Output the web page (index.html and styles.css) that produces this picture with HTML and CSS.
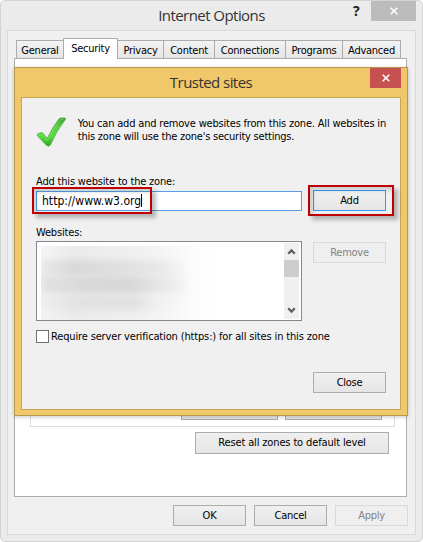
FILE: index.html
```html
<!DOCTYPE html>
<html lang="en">
<head>
<meta charset="utf-8">
<title>Internet Options</title>
<link rel="stylesheet" href="styles.css">
</head>
<body>
<main class="window">
  <header class="window-bar">
    <h1 class="title">Internet Options</h1>
    <span class="help">?</span>
    <span class="window-close"><svg width="8" height="8" viewBox="0 0 8 8"><path d="M.7 .7 7.3 7.3M7.3 .7 .7 7.3"/></svg></span>
  </header>
  <div class="client">
    <nav class="tabs">
      <span class="tab t1">General</span><span class="tab t2 active">Security</span><span class="tab t3">Privacy</span><span class="tab t4">Content</span><span class="tab t5">Connections</span><span class="tab t6">Programs</span><span class="tab t7">Advanced</span>
    </nav>
    <section class="panel">
      <div class="group"><span class="button"></span><span class="button"></span></div>
      <span class="button reset">Reset all zones to default level</span>
    </section>
    <footer class="actions">
      <span class="button">OK</span><span class="button">Cancel</span><span class="button disabled">Apply</span>
    </footer>
  </div>
</main>
<section class="dialog">
  <header class="dialog-bar">
    <h2 class="title">Trusted sites</h2>
    <span class="dialog-close"><svg width="8" height="8" viewBox="0 0 8 8"><path d="M.7 .7 7.3 7.3M7.3 .7 .7 7.3"/></svg></span>
  </header>
  <div class="dialog-body">
    <div class="intro">
      <svg class="check" width="31" height="31" viewBox="0 0 31 31">
        <defs><linearGradient id="g" x1="0" y1="0" x2="0" y2="1"><stop offset="0" stop-color="#35a52c"/><stop offset=".35" stop-color="#5fd046"/><stop offset=".65" stop-color="#52dd3c"/><stop offset="1" stop-color="#2fa622"/></linearGradient></defs>
        <path d="M1.2 18.5Q.8 17 2.600 16.500L5 15.800Q6.800 15.500 7.700 17L11.200 21.500Q16.500 10.500 23 2Q24 .8 25.500 .8L28.600 .8Q30.400 1 29.500 2.500Q20.500 14 14.500 28Q12.800 30.500 10.500 28.400Z" fill="url(#g)" stroke="#55a94b" stroke-width=".8"/>
        <path d="M3 18.300Q5.500 16.700 7 18.500L11.300 23.800Q17 11.500 24.500 2.500L27.500 2.200" fill="none" stroke="#a5e68a" stroke-width="1" opacity=".5"/>
      </svg>
      <p class="copy"><span class="line1">You can add and remove websites from this zone. All websites in</span><br><span class="line2">this zone will use the zone's security settings.</span></p>
    </div>
    <div class="label add-label">Add this website to the zone:</div>
    <div class="row">
      <div class="field"><span class="url">http://www.w3.org</span><i class="caret"></i><b class="mark mark-url"></b></div>
      <div class="add-wrap"><span class="button focus">Add</span><b class="mark mark-add"></b></div>
    </div>
    <div class="label sites-label">Websites:</div>
    <div class="row list-row">
      <div class="list">
        <div class="blurred"><i></i><i></i><i></i></div>
        <div class="scroll">
          <svg width="15" height="17" viewBox="0 0 15 17"><path d="M4.200 10.700 7.500 7.400 10.800 10.700"/></svg>
          <i class="thumb"></i>
          <svg class="down" width="15" height="17" viewBox="0 0 15 17"><path d="M4.200 6.300 7.500 9.600 10.800 6.300"/></svg>
        </div>
      </div>
      <span class="button disabled">Remove</span>
    </div>
    <div class="verify"><i class="box"></i><span>Require server verification (https:) for all sites in this zone</span></div>
    <div class="close-row"><span class="button">Close</span></div>
  </div>
</section>
</body>
</html>
```
FILE: styles.css
```css
* { box-sizing: border-box; }
html, body { margin: 0; width: 423px; height: 542px; overflow: hidden; background: #fff; }
body { position: relative; font: 11px/13px "DejaVu Sans Condensed", "DejaVu Sans", "Noto Sans", sans-serif; font-stretch: condensed; letter-spacing: -.25px; color: #000; white-space: nowrap; }
h1, h2, p { margin: 0; }
svg { display: block; }
.window { width: 423px; height: 542px; padding: 0 6px; border: 1px solid #d3d3d3; border-radius: 5px; background: #ebebeb; }
.title { font: 400 15px/20px "Open Sans", "Noto Sans", sans-serif; font-stretch: normal; color: #333; letter-spacing: -.55px; text-align: center; }
.window-bar { position: relative; height: 29px; padding-top: 4px; }
.help { position: absolute; left: 346px; top: 2px; font: 700 14px/16px "Noto Sans", sans-serif; color: #222; }
.window-close { position: absolute; left: 364px; top: 0; width: 45px; height: 20px; background: #bcbcbc; padding: 6px 0 0 19px; }
.window-close path, .dialog-close path { stroke: #fff; stroke-width: 1.6; fill: none; }
.client { height: 505px; border: 1px solid #d9d9d9; background: #f0f0f0; padding: 7px 6px 0; }
.tabs { display: flex; align-items: flex-end; height: 20px; padding-left: 2px; }
.tab { height: 18px; border: 1px solid #acacac; border-bottom: 0; background: linear-gradient(#f2f2f2, #e6e6e6); padding-top: 3px; text-align: center; margin-right: -1px; }
.tab.active { height: 21px; background: #fff; position: relative; margin-bottom: -1px; padding-top: 3px; }
.t1 { width: 48px; } .t2 { width: 55px; } .t3 { width: 47px; } .t4 { width: 52px; } .t5 { width: 72px; } .t6 { width: 58px; } .t7 { width: 59px; }
.panel { width: 393px; height: 439px; border: 1px solid #acacac; background: #fff; padding: 20px 0 0 15px; }
.group { width: 365px; height: 348px; border: 1px solid #dcdcdc; border-top: 0; display: flex; align-items: flex-end; gap: 7px; padding: 0 0 6px 150px; }
.group .button { width: 97px; }
.button { display: block; width: 73px; height: 21px; border: 1px solid #acacac; background: linear-gradient(#f0f0f0, #e5e5e5); text-align: center; line-height: 19px; }
.button.disabled { border-color: #d9d9d9; background: #efefef; color: #838383; }
.reset { width: 194px; height: 22px; margin: 5px 0 0 165px; line-height: 20px; letter-spacing: -.14px; }
.actions { display: flex; gap: 8px; padding: 8px 0 0 159px; }
.dialog { position: absolute; left: 14px; top: 67px; width: 394px; height: 349px; border: 1px solid #b8974e; background: #f0c869; padding: 0 6px; box-shadow: 0 1px 4px rgba(0,0,0,.22); }
.dialog-bar { position: relative; height: 29px; padding-top: 4px; }
.dialog-close { position: absolute; left: 349px; top: 0; width: 31px; height: 20px; background: #c75050; padding: 6px 0 0 12px; }
.dialog-body { width: 380px; height: 313px; border: 1px solid #c9a557; background: #f0f0f0; padding: 19px 14px 0; }
.intro { display: flex; height: 58px; gap: 11px; }
.line1 { letter-spacing: -.19px; }
.line2 { letter-spacing: -.23px; }
.row { display: flex; gap: 11px; }
.label { height: 15px; letter-spacing: -.18px; }
.field { position: relative; width: 266px; height: 20px; margin-top: 1px; border: 1px solid #569de5; background: #fff; padding-left: 5px; line-height: 18px; display: flex; }
.url { width: 99px; font-size: 12px; letter-spacing: .03px; }
.caret { width: 1px; height: 13px; margin-top: 2px; background: #000; }
.mark { position: absolute; border: 2px solid #c00000; box-shadow: 4px 4px 4px rgba(0,0,0,.25), inset 3px 3px 4px rgba(0,0,0,.16); }
.mark-url { left: -5px; top: -5px; width: 120px; height: 27px; }
.add-wrap { position: relative; }
.mark-add { left: -5px; top: -5px; width: 86px; height: 31px; }
.button.focus { border-color: #3399ff; }
.sites-label { margin-top: 15px; }
.list { width: 266px; height: 80px; border: 1px solid #828790; background: #fff; padding: 1px 2px 1px 4px; display: flex; justify-content: space-between; }
.list-row .button { margin-top: 1px; }
.blurred { width: 210px; height: 74px; margin-top: 3px; padding-top: 14px; overflow: hidden; background: linear-gradient(90deg, #f4f4f4, #ebebeb 16%, #f1f1f1 50%, #fcfcfc 72%, #fff 85%); }
.blurred i { display: block; height: 16px; filter: blur(3px); background: linear-gradient(90deg, #e9e9e9, #d8d8d8 16%, #e0e0e0 40%, #e8e8e8 56%, #fff0 70%); }
.blurred i:nth-child(2) { height: 18px; background: linear-gradient(90deg, #e2e2e2, #d9d9d9 18%, #d6d6d6 42%, #e8e8e8 58%, #fff0 72%); }
.blurred i:nth-child(3) { background: linear-gradient(90deg, #efefef, #e2e2e2 16%, #e1e1e1 45%, #f1f1f1 56%, #fff0 68%); }
.scroll { width: 15px; height: 76px; background: #f0f0f0; display: flex; flex-direction: column; }
.scroll path { fill: none; stroke: #606060; stroke-width: 2.2; }
.thumb { height: 17px; background: #cdcdcd; }
.down { margin-top: auto; }
.verify { display: flex; gap: 2px; margin-top: 9px; letter-spacing: -.15px; }
.box { width: 13px; height: 13px; border: 1px solid #707070; background: #fff; }
.close-row { display: flex; justify-content: flex-end; width: 350px; margin-top: 29px; }
```
